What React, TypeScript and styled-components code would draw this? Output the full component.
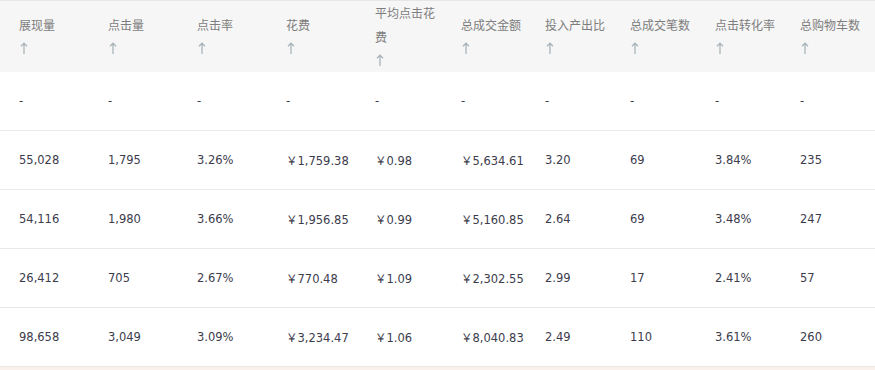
import styled, { createGlobalStyle } from 'styled-components';

interface Column {
  title: string;
  width: number;
}

const columns: Column[] = [
  { title: '展现量', width: 89 },
  { title: '点击量', width: 89 },
  { title: '点击率', width: 89 },
  { title: '花费', width: 89 },
  { title: '平均点击花费', width: 86 },
  { title: '总成交金额', width: 84 },
  { title: '投入产出比', width: 85 },
  { title: '总成交笔数', width: 85 },
  { title: '点击转化率', width: 85 },
  { title: '总购物车数', width: 94 },
];

const rows: string[][] = [
  ['-', '-', '-', '-', '-', '-', '-', '-', '-', '-'],
  ['55,028', '1,795', '3.26%', '￥1,759.38', '￥0.98', '￥5,634.61', '3.20', '69', '3.84%', '235'],
  ['54,116', '1,980', '3.66%', '￥1,956.85', '￥0.99', '￥5,160.85', '2.64', '69', '3.48%', '247'],
  ['26,412', '705', '2.67%', '￥770.48', '￥1.09', '￥2,302.55', '2.99', '17', '2.41%', '57'],
  ['98,658', '3,049', '3.09%', '￥3,234.47', '￥1.06', '￥8,040.83', '2.49', '110', '3.61%', '260'],
];

const UpArrow = () => (
  <svg width="8" height="12" viewBox="0 0 8 12" fill="none">
    <path d="M4 1.2V12M1 4.3L4 1.2L7 4.3" stroke="#a9b5bb" strokeWidth="1.3" />
  </svg>
);

const App: React.FC = () => {
  return (
    <>
      <GlobalStyle />
      <Wrap>
        <Table>
          <colgroup>
            {columns.map((col) => (
              <col key={col.title} style={{ width: col.width }} />
            ))}
          </colgroup>
          <thead>
            <tr>
              {columns.map((col) => (
                <HeadCell key={col.title}>
                  <HeadTitle>{col.title}</HeadTitle>
                  <SortArrow>
                    <UpArrow />
                  </SortArrow>
                </HeadCell>
              ))}
            </tr>
          </thead>
          <tbody>
            {rows.map((row, i) => (
              <tr key={i}>
                {row.map((value, j) => (
                  <Cell key={j}>{value}</Cell>
                ))}
              </tr>
            ))}
          </tbody>
        </Table>
        <Footer />
      </Wrap>
    </>
  );
};

export default App;

const GlobalStyle = createGlobalStyle`
  html, body {
    margin: 0;
    padding: 0;
    background: #ffffff;
  }
  body {
    font-family: "DejaVu Sans", "Noto Sans CJK SC", sans-serif;
  }
`;

const Wrap = styled.div`
  width: 875px;
  height: 370px;
  overflow: hidden;
  border-top: 1px solid #e6e6e6;
  box-sizing: border-box;
`;

const Table = styled.table`
  width: 875px;
  table-layout: fixed;
  border-collapse: collapse;
  border-spacing: 0;
`;

const HeadCell = styled.th`
  height: 71px;
  padding: 0 0 0 19px;
  background: #f6f6f6;
  text-align: left;
  vertical-align: middle;
  font-weight: normal;
  font-size: 12px;
  line-height: 23.5px;
  color: #7d7d7d;
  font-family: "Noto Sans CJK SC", sans-serif;
`;

const HeadTitle = styled.div`
  word-break: break-all;
`;

const SortArrow = styled.div`
  height: 23.5px;
  display: flex;
  align-items: center;
  padding-left: 1px;
`;

const Cell = styled.td`
  height: 58px;
  padding: 0 0 0 19px;
  border-bottom: 1px solid #e9e9e9;
  font-size: 11.5px;
  color: #3c3c4c;
  white-space: nowrap;
  vertical-align: middle;
`;

const Footer = styled.div`
  height: 8px;
  background: #fbf1ec;
`;
